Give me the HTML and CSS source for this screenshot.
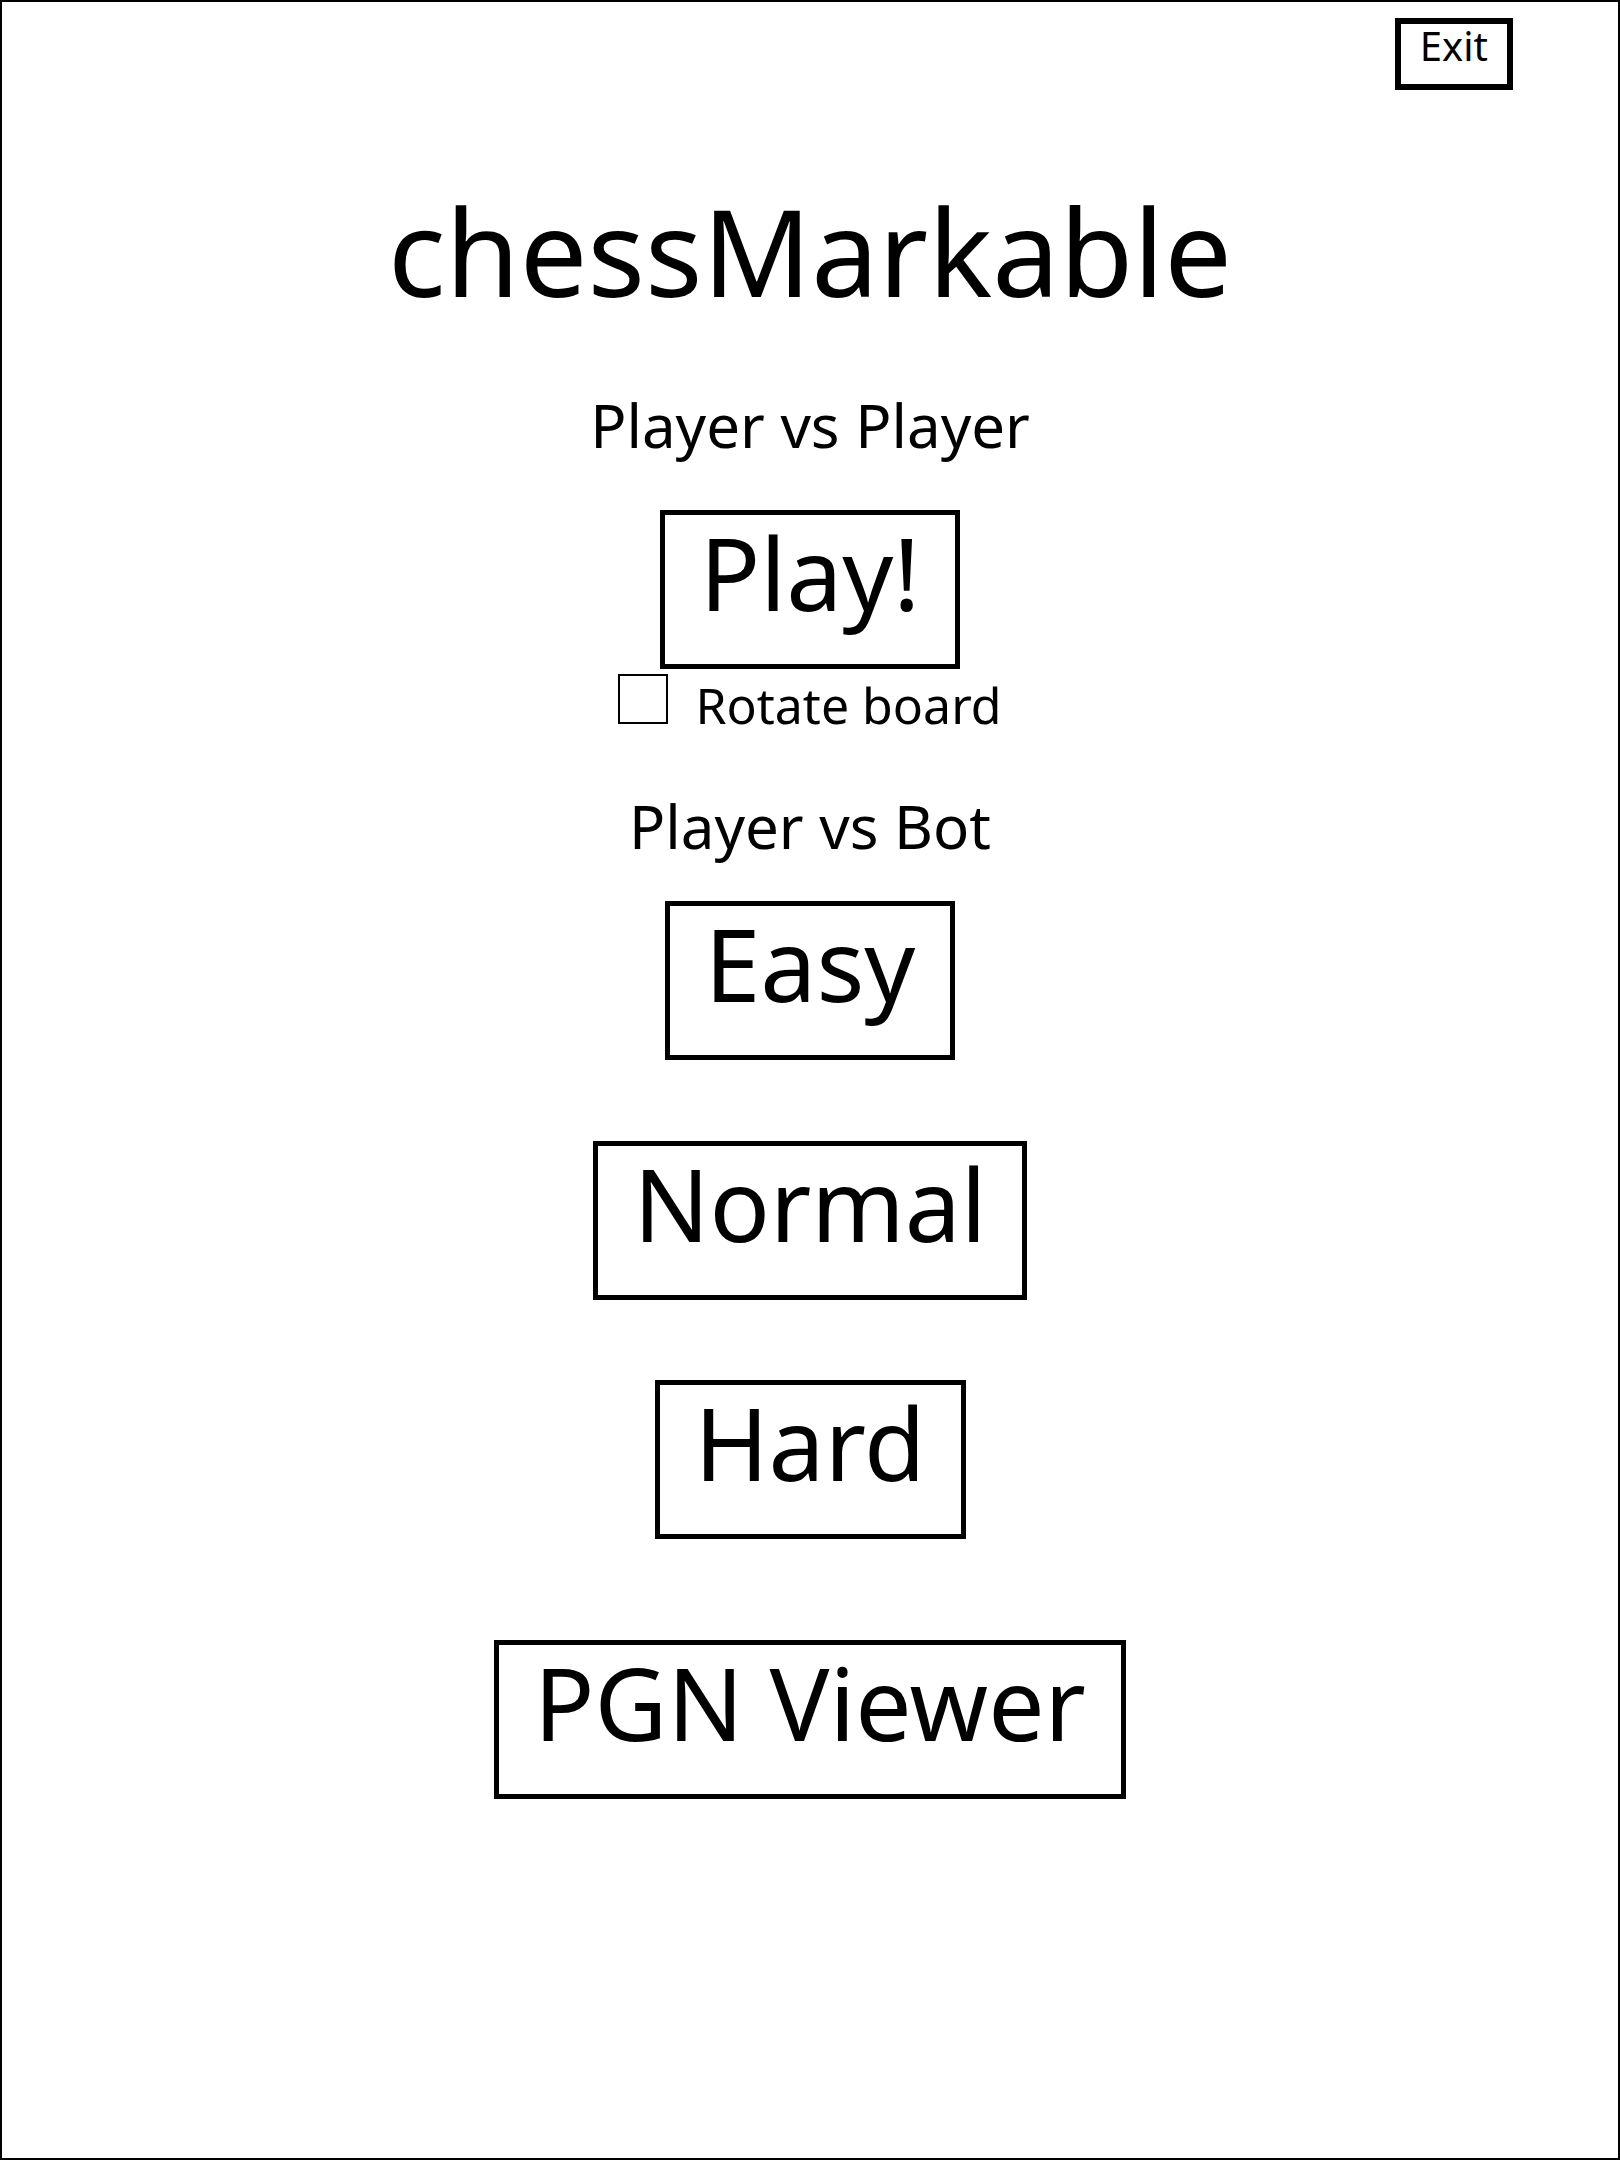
FILE: index.html
```html
<!DOCTYPE html>
<html lang="en">
<head>
<meta charset="utf-8">
<title>chessMarkable</title>
<link rel="stylesheet" href="styles.css">
</head>
<body>
<div class="screen">
  <header class="topbar">
    <button class="exit-btn" type="button">Exit</button>
  </header>
  <main class="menu">
    <h1 class="title">chessMarkable</h1>
    <h2 class="section section-pvp">Player vs Player</h2>
    <button class="btn btn-play" type="button">Play!</button>
    <label class="toggle">
      <span class="checkbox"></span>
      <span class="toggle-label">Rotate board</span>
    </label>
    <h2 class="section section-pvb">Player vs Bot</h2>
    <button class="btn btn-easy" type="button">Easy</button>
    <button class="btn btn-normal" type="button">Normal</button>
    <button class="btn btn-hard" type="button">Hard</button>
    <button class="btn btn-pgn" type="button">PGN Viewer</button>
  </main>
</div>
</body>
</html>
```
FILE: styles.css
```css
* {
  box-sizing: border-box;
}

html, body {
  margin: 0;
  padding: 0;
  background: #ffffff;
}

body {
  font-family: "Noto Sans", "Open Sans", sans-serif;
  color: #000000;
}

.screen {
  width: 1620px;
  height: 2160px;
  border: 2px solid #000000;
  display: flex;
  flex-direction: column;
}

.topbar {
  display: flex;
  justify-content: flex-end;
  padding: 16px 105px 0 0;
}

.exit-btn {
  font-family: inherit;
  font-size: 40px;
  line-height: 40px;
  color: #000000;
  background: #ffffff;
  border: 6px solid #000000;
  padding: 2px 19px 18px;
  margin: 0;
  border-radius: 0;
}

.menu {
  display: flex;
  flex-direction: column;
  align-items: center;
}

.title {
  margin: 101px 0 0;
  font-size: 120px;
  line-height: 120px;
  font-weight: 400;
}

.section {
  margin: 0;
  font-size: 60px;
  line-height: 60px;
  font-weight: 400;
}

.section-pvp {
  margin-top: 84px;
}

.section-pvb {
  margin-top: 66px;
}

.btn {
  font-family: inherit;
  font-size: 100px;
  line-height: 100px;
  color: #000000;
  background: #ffffff;
  border: 5px solid #000000;
  padding: 7px 35px 42px;
  margin: 0;
  border-radius: 0;
}

.btn-play {
  margin-top: 55px;
}

.btn-easy {
  margin-top: 45px;
}

.btn-normal {
  margin-top: 81px;
}

.btn-hard {
  margin-top: 80px;
}

.btn-pgn {
  margin-top: 101px;
}

.toggle {
  display: flex;
  align-items: flex-start;
  margin-top: 5px;
}

.checkbox {
  width: 50px;
  height: 50px;
  border: 2px solid #000000;
  margin-right: 27px;
}

.toggle-label {
  font-size: 50px;
  line-height: 50px;
  padding-top: 6px;
}
```
